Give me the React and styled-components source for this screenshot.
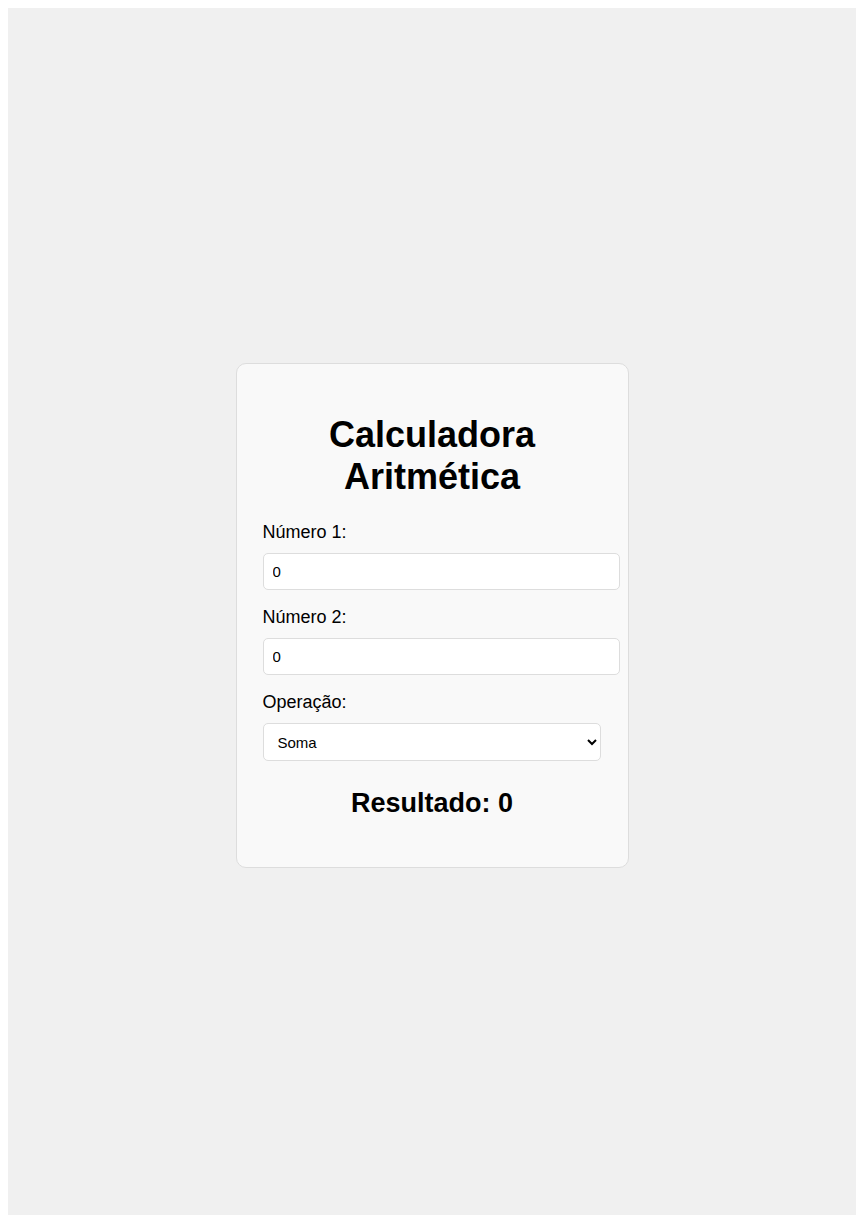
import React, { useState } from 'react';
import styled, { createGlobalStyle } from 'styled-components';

const GlobalStyle = createGlobalStyle`
  body {
    margin: 8px;
    font-family: "Liberation Sans", Arial, sans-serif;
    font-size: 18px;
    color: #000;
  }
`;

export default function App() {
  const [a, setA] = useState(0);
  const [b, setB] = useState(0);
  const [op, setOp] = useState('soma');

  return (
    <Page>
      <GlobalStyle />
      <Card>
        <Title>Calculadora Aritmética</Title>
        <Label htmlFor="n1">Número 1:</Label>
        <NumberInput id="n1" type="number" value={a} onChange={e => setA(e.target.value)} />
        <Label htmlFor="n2">Número 2:</Label>
        <NumberInput id="n2" type="number" value={b} onChange={e => setB(e.target.value)} />
        <Label htmlFor="op">Operação:</Label>
        <Select id="op" value={op} onChange={e => setOp(e.target.value)}>
          <option value="soma">Soma</option>
          <option value="subtracao">Subtração</option>
          <option value="multiplicacao">Multiplicação</option>
          <option value="divisao">Divisão</option>
        </Select>
        <Result>Resultado: {calculate(a, b, op)}</Result>
      </Card>
    </Page>
  );
}

const calculate = (a, b, op) => {
  const x = parseFloat(a) || 0;
  const y = parseFloat(b) || 0;
  switch (op) {
    case 'subtracao':
      return x - y;
    case 'multiplicacao':
      return x * y;
    case 'divisao':
      return y !== 0 ? x / y : 'Erro';
    default:
      return x + y;
  }
};

const Page = styled.div`
  min-height: 100vh;
  background: #f0f0f0;
  display: flex;
  align-items: center;
  justify-content: center;
`;

const Card = styled.div`
  width: 339px;
  padding: 26px;
  background: #f9f9f9;
  border: 1px solid #ddd;
  border-radius: 10px;
`;

const Title = styled.h1`
  font-size: 36px;
  text-align: center;
  margin: 24px 0;
`;

const Label = styled.label`
  display: block;
  margin-bottom: 10px;
`;

const NumberInput = styled.input`
  display: block;
  box-sizing: content-box;
  width: calc(100% - 2px);
  height: 19px;
  padding: 8px 9px;
  margin: 0 0 17px;
  border: 1px solid #ddd;
  border-radius: 5px;
  background: #fff;
  font-family: "Liberation Sans", Arial, sans-serif;
  font-size: 15px;
  color: #000;
  outline: none;

  &::-webkit-inner-spin-button,
  &::-webkit-outer-spin-button {
    -webkit-appearance: none;
    margin: 0;
  }
`;

const Select = styled.select`
  display: block;
  width: calc(100% - 1px);
  height: 38px;
  padding: 0 8px 0 10px;
  border: 1px solid #ddd;
  border-radius: 5px;
  background: #fff;
  font-family: "Liberation Sans", Arial, sans-serif;
  font-size: 15px;
  color: #000;
`;

const Result = styled.h2`
  font-size: 27px;
  text-align: center;
  margin: 27px 0 22px;
`;
